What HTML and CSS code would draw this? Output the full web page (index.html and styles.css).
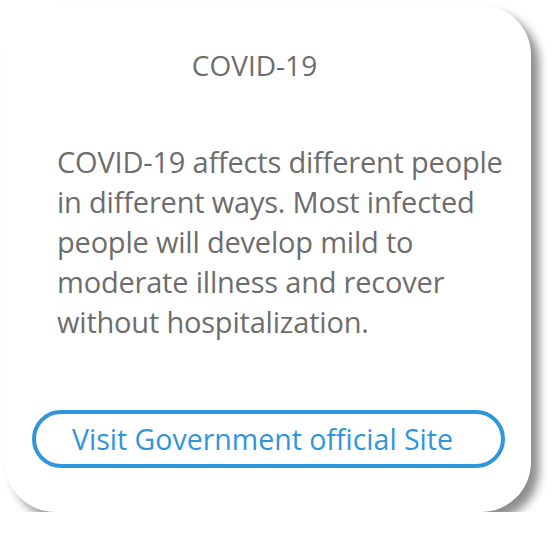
FILE: index.html
```html
<!DOCTYPE html>
<html>
<head>
<meta charset="utf-8">
<link rel="stylesheet" href="styles.css">
</head>
<body>
<div class="card">
  <h1 class="title">COVID-19</h1>
  <p class="desc">COVID-19 affects different people in different ways. Most infected people will develop mild to moderate illness and recover without hospitalization.</p>
  <a class="btn" href="#">Visit Government official Site</a>
</div>
</body>
</html>
```
FILE: styles.css
```css
html, body {
  margin: 0;
  padding: 0;
  background: #ffffff;
}
body {
  font-family: "Open Sans", "Noto Sans", sans-serif;
}
.card {
  box-sizing: border-box;
  margin: 5px 0 0 5px;
  width: 526px;
  height: 507px;
  background: #ffffff;
  border-radius: 50px;
  box-shadow: 8px 8px 10px rgba(0, 0, 0, 0.45);
  padding: 43px 0 0 0;
  display: flex;
  flex-direction: column;
}
.title {
  margin: 0;
  padding-right: 27px;
  font-size: 28px;
  line-height: 34px;
  font-weight: 400;
  color: #6d6d6d;
  text-align: center;
}
.desc {
  margin: 60px 0 0 52px;
  width: 460px;
  font-size: 29px;
  letter-spacing: -0.2px;
  line-height: 40px;
  color: #6d6d6d;
}
.btn {
  box-sizing: border-box;
  margin: 68px 0 0 27px;
  width: 473px;
  height: 58px;
  border: 4px solid #2f96dc;
  border-radius: 29px;
  color: #2f96dc;
  font-size: 28.5px;
  text-decoration: none;
  display: flex;
  align-items: center;
  justify-content: center;
  padding-right: 12px;
}
```
